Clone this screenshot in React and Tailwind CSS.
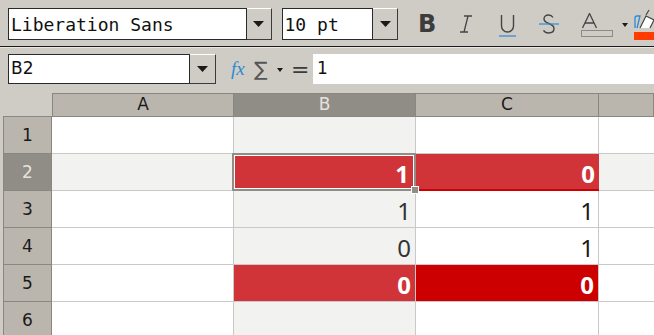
import React from 'react';

const mono = { fontFamily: '"DejaVu Sans Mono", monospace' };

// little 3d dropdown button
const DropBtn = ({ w = 'w-[25px]' }) => (
  <div className={`${w} h-full bg-[#cfccc6] border-r border-b border-[#3a3a3a] border-t border-t-white flex items-center justify-center`}>
    <svg width="11" height="6" viewBox="0 0 11 6"><path d="M0 0h11L5.5 6z" fill="#1a1a1a" /></svg>
  </div>
);

const Cell = ({ children, bg = 'bg-white', text = 'text-[#1a1a1a]', bold, last }) => (
  <div
    className={`${bg} ${text} ${last ? '' : 'border-r'} border-b border-[#c9c9c9] flex items-center justify-end pr-[4px] pt-[4px] text-[24px] ${bold ? 'font-bold' : ''}`}
    style={{ fontFamily: '"Noto Sans", sans-serif' }}
  >
    {children}
  </div>
);

const RowHead = ({ n, active }) => (
  <div
    className={`${active ? 'bg-[#8f8d86] text-[#e6e3de]' : 'bg-[#bab6ae] text-[#1a1a1a]'} border-r border-b border-[#8a8780] border-l border-l-[#8a8780] flex items-center justify-center text-[17px] pt-[2px]`}
    style={{ fontFamily: '"DejaVu Sans", sans-serif' }}
  >
    {n}
  </div>
);

export default function App() {
  const rows = [
    { n: 1 },
    { n: 2, active: true },
    { n: 3, b: { v: '1', text: 'text-[#333]' }, c: { v: '1' } },
    { n: 4, b: { v: '0', text: 'text-[#333]' }, c: { v: '1' } },
    { n: 5, b: { v: '0', bg: 'bg-[#d13438]', text: 'text-white', bold: true }, c: { v: '0', bg: 'bg-[#cc0000]', text: 'text-white', bold: true } },
    { n: 6 },
  ];

  return (
    <div className="w-[654px] h-[335px] overflow-hidden bg-[#cfccc6] flex flex-col">
      {/* formatting toolbar */}
      <div className="h-[47px] shrink-0 border-b border-[#1a1a1a] flex items-start pt-[8px] pl-[8px]">
        <div className="h-[32px] w-[240px] bg-white border border-[#2a2a2a] flex items-center pl-[2px] text-[18px] text-[#111]" style={mono}>
          Liberation Sans
        </div>
        <div className="h-[32px]"><DropBtn w="w-[25px]" /></div>
        <div className="w-[10px]" />
        <div className="h-[32px] w-[92px] bg-white border border-[#2a2a2a] flex items-center pl-[2px] text-[18px] text-[#111]" style={mono}>
          10 pt
        </div>
        <div className="h-[32px]"><DropBtn w="w-[25px]" /></div>
        <div className="flex items-center h-[32px] ml-[20px] text-[#3c3c3c]" style={{ fontFamily: '"DejaVu Sans", sans-serif' }}>
          <span className="text-[24px] font-bold w-[41px] leading-none">B</span>
          <span className="w-[40px] flex justify-start">
            <svg width="14" height="18" viewBox="0 0 14 18"><path d="M5 1h8M1 17h8M9 1L5 17" stroke="#444" strokeWidth="1.3" fill="none" /></svg>
          </span>
          <span className="w-[40px] relative flex flex-col items-start mt-[4px]">
            <svg width="17" height="22" viewBox="0 0 17 22"><path d="M2.5 0v11a6 6 0 0 0 12 0V0" stroke="#444" strokeWidth="1.4" fill="none" /><path d="M0 21h17" stroke="#2a8ad4" strokeWidth="1.2" /></svg>
          </span>
          <span className="w-[42px] relative">
            <svg width="20" height="20" viewBox="0 0 20 20"><path d="M14 3.5C13 1.8 11.5 1 9.5 1 7 1 5 2.4 5 5c0 5.5 10 3.5 10 9.5 0 2.8-2.4 4.5-5.5 4.5-2.3 0-4-1-5-2.6" stroke="#444" strokeWidth="1.4" fill="none" /><path d="M0 10h20" stroke="#2a8ad4" strokeWidth="1.2" /></svg>
          </span>
          <span className="w-[40px] relative flex flex-col items-start mt-[2px]">
            <svg width="33" height="24" viewBox="0 0 33 24"><path d="M1.5 15L8.5 0.5 15.5 15M4 10h9" stroke="#444" strokeWidth="1.3" fill="none" /><rect x="0.5" y="17.5" width="31" height="6" fill="none" stroke="#8a8a8a" /></svg>
          </span>
          <svg width="6" height="4" viewBox="0 0 6 4" className="ml-[1px] mt-[2px]"><path d="M0 0h6L3 4z" fill="#1a1a1a" /></svg>
          <span className="ml-[6px] relative w-[20px] h-[32px]">
            <svg width="20" height="32" viewBox="0 0 20 32"><path d="M1 20V10q0-2 2-2h3l-3 12" stroke="#2a8ad4" strokeWidth="1.3" fill="none" /><path d="M6 20l6-12 8 4-4 8" stroke="#444" strokeWidth="1.2" fill="white" /><path d="M12 7l3-5" stroke="#444" strokeWidth="1.2" /><rect x="0" y="24" width="20" height="8" fill="#ff3b00" /></svg>
          </span>
        </div>
      </div>

      {/* formula bar */}
      <div className="h-[46px] shrink-0 flex items-start pt-[6px] pl-[8px] border-t border-t-[#e8e6e2]">
        <div className="h-[30px] w-[182px] bg-white border border-[#2a2a2a] flex items-center pl-[2px] text-[17px] text-[#111]" style={{ fontFamily: '"DejaVu Sans", sans-serif' }}>
          B2
        </div>
        <div className="h-[30px]"><DropBtn w="w-[26px]" /></div>
        <div className="flex items-center h-[30px] ml-[15px]">
          <span className="text-[19px] italic text-[#2a8ad4] w-[22px]" style={{ fontFamily: '"Liberation Serif", serif' }}>fx</span>
          <span className="text-[20px] text-[#555] w-[18px] ml-[1px]" style={{ fontFamily: '"DejaVu Sans", sans-serif' }}>∑</span>
          <svg width="6" height="4" viewBox="0 0 6 4" className="ml-[5px] mt-[2px]"><path d="M0 0h6L3 4z" fill="#1a1a1a" /></svg>
          <span className="text-[22px] text-[#3c3c3c] ml-[8px] w-[20px]" style={{ fontFamily: '"DejaVu Sans", sans-serif' }}>=</span>
        </div>
        <div className="flex-1 h-[30px] bg-white ml-[2px] flex items-center pl-[4px] text-[17px] text-[#111]" style={{ fontFamily: '"DejaVu Sans", sans-serif' }}>
          1
        </div>
      </div>

      {/* sheet */}
      <div className="shrink-0 pl-[3px] grid grid-cols-[49px_182px_182px_183px_1fr] grid-rows-[24px_37px_37px_37px_37px_37px_37px] content-start">
        <div className="bg-[#cfccc6] border-b border-[#8a8780]" />
        {['A', 'B', 'C', ''].map((c, i) => (
          <div
            key={i}
            className={`${c === 'B' ? 'bg-[#8f8d86] text-[#e6e3de]' : 'bg-[#bab6ae] text-[#1a1a1a]'} border-t border-t-[#8a8780] border-b border-b-[#8a8780] border-r border-r-[#8a8780] ${i === 0 ? 'border-l border-l-[#8a8780]' : ''} flex items-center justify-center text-[17px]`}
            style={{ fontFamily: '"DejaVu Sans", sans-serif' }}
          >
            {c}
          </div>
        ))}

        {rows.map((r) => {
          if (r.active) {
            return (
              <React.Fragment key={r.n}>
                <RowHead n={r.n} active />
                <Cell bg="bg-[#f2f2f0]" />
                <div className="relative bg-[#f2f2f0] border-r border-b border-[#c9c9c9]">
                  <div className="absolute -left-[2px] -top-[1px] right-[-1px] bottom-[-1px] border-2 border-[#8f8d86] z-10">
                    <div className="w-full h-full border border-white bg-[#d13438] flex items-center justify-end pr-[4px] pt-[4px] text-[24px] font-bold text-white" style={{ fontFamily: '"Noto Sans", sans-serif' }}>
                      1
                    </div>
                    <div className="absolute -right-[5px] -bottom-[5px] w-[8px] h-[8px] bg-[#8f8d86] border border-white" />
                  </div>
                </div>
                <div className="bg-[#d13438] border-b-2 border-[#cc0000] flex items-center justify-end pr-[4px] pt-[4px] text-[24px] font-bold text-white" style={{ fontFamily: '"Noto Sans", sans-serif' }}>
                  0
                </div>
                <Cell bg="bg-[#f2f2f0]" last />
              </React.Fragment>
            );
          }
          const b = r.b || {};
          const c = r.c || {};
          return (
            <React.Fragment key={r.n}>
              <RowHead n={r.n} />
              <Cell />
              <Cell bg={b.bg || 'bg-[#f2f2f0]'} text={b.text} bold={b.bold}>{b.v}</Cell>
              <Cell bg={c.bg} text={c.text} bold={c.bold}>{c.v}</Cell>
              <Cell last />
            </React.Fragment>
          );
        })}
      </div>
    </div>
  );
}
